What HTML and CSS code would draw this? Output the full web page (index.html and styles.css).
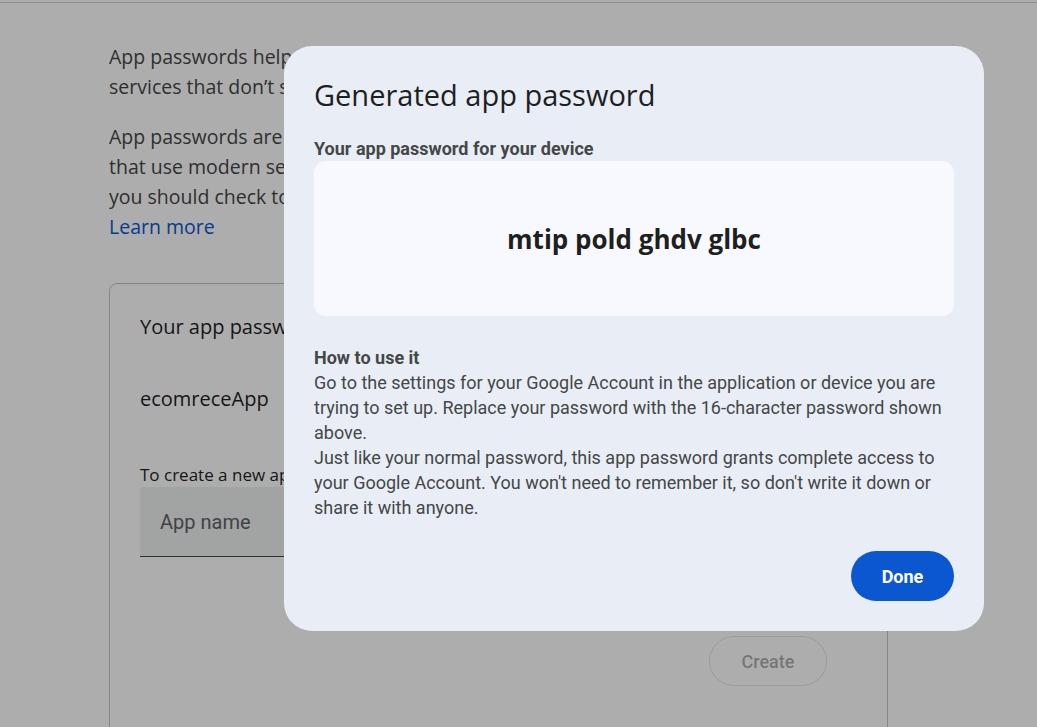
FILE: index.html
```html
<!DOCTYPE html>
<html lang="en">
<head>
<meta charset="utf-8">
<title>App passwords</title>
<link rel="stylesheet" href="styles.css">
</head>
<body>
<div class="topbar"></div>
<main class="page">
  <p class="intro"><span class="ln">App passwords help you sign into your Google Account on older apps and</span><span class="ln">services that don’t support modern security standards.</span></p>
  <p class="intro"><span class="ln">App passwords are less secure than using up-to-date apps and services</span><span class="ln">that use modern security standards. Before you create an app password,</span><span class="ln">you should check to see if your app needs this in order to sign in.</span><a class="learn" href="#">Learn more</a></p>
  <section class="card">
    <h2 class="card-title">Your app passwords</h2>
    <div class="app-row">ecomreceApp</div>
    <div class="create-label">To create a new app specific password, type a name for it below...</div>
    <div class="field"><span class="placeholder">App name</span></div>
    <div class="card-actions"><button class="btn-create" disabled>Create</button></div>
  </section>
</main>
<div class="scrim"></div>
<div class="dialog" role="dialog">
  <h1 class="dialog-title">Generated app password</h1>
  <div class="dialog-sub">Your app password for your device</div>
  <div class="pw-box"><span class="pw">mtip pold ghdv glbc</span></div>
  <div class="howto">
    <div class="howto-title">How to use it</div>
    <div class="howto-text">Go to the settings for your Google Account in the application or device you are trying to set up. Replace your password with the 16-character password shown above.</div>
    <div class="howto-text">Just like your normal password, this app password grants complete access to your Google Account. You won't need to remember it, so don't write it down or share it with anyone.</div>
  </div>
  <div class="dialog-actions"><button class="btn-done">Done</button></div>
</div>
</body>
</html>
```
FILE: styles.css
```css
* { box-sizing: border-box; }
html, body { margin: 0; padding: 0; }
body {
  background: #ffffff;
  font-family: Roboto, "Liberation Sans", sans-serif;
  color: #444746;
  height: 727px;
  overflow: hidden;
}
.topbar {
  height: 3px;
  border-bottom: 1px solid #d2d2d2;
}
.page {
  padding: 39px 0 0 109px;
  width: 888px;
}
.intro {
  margin: 0 0 20px 0;
  font-family: "Open Sans", Roboto, sans-serif;
  font-size: 19.5px;
  line-height: 30px;
  color: #444746;
}
.ln { display: block; white-space: nowrap; overflow: hidden; }
.learn { color: #0b57d0; text-decoration: none; }
.intro + .intro { margin-bottom: 41px; }
.card {
  border: 1px solid #c4c7c5;
  border-radius: 8px;
  padding: 29px 60px 40px 30px;
  height: 460px;
}
.card-title {
  margin: 0;
  font-family: "Open Sans", Roboto, sans-serif;
  font-size: 20px;
  font-weight: 400;
  line-height: 28px;
  color: #1f1f1f;
}
.app-row {
  margin-top: 44px;
  font-family: "Open Sans", Roboto, sans-serif;
  font-size: 20px;
  line-height: 28px;
  color: #1f1f1f;
}
.create-label {
  margin-top: 50px;
  font-family: "Open Sans", Roboto, sans-serif;
  font-size: 17px;
  line-height: 24px;
  color: #1f1f1f;
}
.field {
  margin-top: 0;
  height: 70px;
  background: #eff0f0;
  border-bottom: 1px solid #444746;
  border-radius: 4px 4px 0 0;
  display: flex;
  align-items: center;
  padding-left: 20px;
  width: 400px;
}
.placeholder { font-size: 20px; color: #5f6368; }
.card-actions {
  display: flex;
  justify-content: flex-end;
  margin-top: 79px;
}
.btn-create {
  width: 118px;
  height: 50px;
  border-radius: 25px;
  border: 1px solid rgba(31,31,31,0.12);
  background: transparent;
  font-family: inherit;
  font-size: 18px;
  font-weight: 500;
  color: rgba(31,31,31,0.38);
}
.scrim {
  position: fixed;
  inset: 0;
  background: rgba(0,0,0,0.32);
}
.dialog {
  position: fixed;
  left: 284px;
  top: 46px;
  width: 700px;
  background: #e9edf6;
  border-radius: 28px;
  padding: 31px 30px 30px 30px;
}
.dialog-title {
  margin: 0;
  font-family: "Open Sans", Roboto, sans-serif;
  font-weight: 400;
  font-size: 29px;
  line-height: 36px;
  color: #1f1f1f;
}
.dialog-sub {
  margin-top: 24px;
  font-size: 18px;
  line-height: 24px;
  font-weight: 700;
  color: #444746;
}
.pw-box {
  margin-top: 0;
  height: 155px;
  background: #f8f9fe;
  border-radius: 12px;
  display: flex;
  align-items: center;
  justify-content: center;
}
.pw {
  font-family: "Open Sans", Roboto, sans-serif;
  font-weight: 700;
  font-size: 26px;
  color: #1f1f1f;
}
.howto {
  margin-top: 29px;
  font-size: 18px;
  line-height: 25px;
  color: #444746;
}
.howto-title { font-weight: 700; }
.dialog-actions {
  display: flex;
  justify-content: flex-end;
  margin-top: 31px;
}
.btn-done {
  width: 103px;
  height: 50px;
  border: none;
  border-radius: 25px;
  background: #0b57d0;
  color: #ffffff;
  font-family: inherit;
  font-size: 18px;
  font-weight: 700;
}
```
